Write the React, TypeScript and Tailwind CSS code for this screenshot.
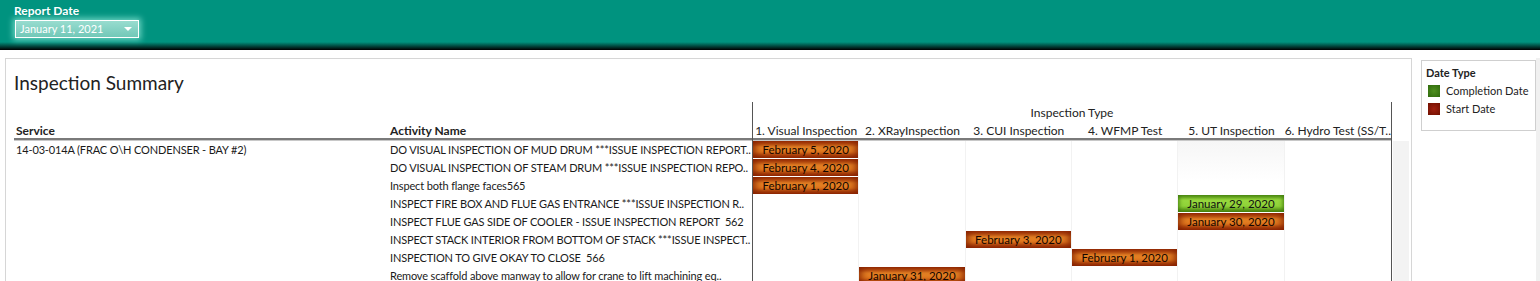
import React from "react";

type Cell = { col: number; label: string; kind: "start" | "done" };

const columns = [
  "1. Visual Inspection",
  "2. XRayInspection",
  "3. CUI Inspection",
  "4. WFMP Test",
  "5. UT Inspection",
  "6. Hydro Test (SS/T..",
];

const rows: { activity: string; cells: Cell[] }[] = [
  {
    activity: "DO VISUAL INSPECTION OF MUD DRUM ***ISSUE INSPECTION REPORT..",
    cells: [{ col: 0, label: "February 5, 2020", kind: "start" }],
  },
  {
    activity: "DO VISUAL INSPECTION OF STEAM DRUM ***ISSUE INSPECTION REPO..",
    cells: [{ col: 0, label: "February 4, 2020", kind: "start" }],
  },
  {
    activity: "Inspect both flange faces565",
    cells: [{ col: 0, label: "February 1, 2020", kind: "start" }],
  },
  {
    activity: "INSPECT FIRE BOX AND FLUE GAS ENTRANCE ***ISSUE INSPECTION R..",
    cells: [{ col: 4, label: "January 29, 2020", kind: "done" }],
  },
  {
    activity: "INSPECT FLUE GAS SIDE OF COOLER - ISSUE INSPECTION REPORT  562",
    cells: [{ col: 4, label: "January 30, 2020", kind: "start" }],
  },
  {
    activity: "INSPECT STACK INTERIOR FROM BOTTOM OF STACK ***ISSUE INSPECT..",
    cells: [{ col: 2, label: "February 3, 2020", kind: "start" }],
  },
  {
    activity: "INSPECTION TO GIVE OKAY TO CLOSE  566",
    cells: [{ col: 3, label: "February 1, 2020", kind: "start" }],
  },
  {
    activity: "Remove scaffold above manway to allow for crane to lift machining eq..",
    cells: [{ col: 1, label: "January 31, 2020", kind: "start" }],
  },
];

function Bar({ cell }: { cell: Cell }) {
  const done = cell.kind === "done";
  return (
    <div
      className={
        done
          ? "flex h-full items-center justify-center bg-[linear-gradient(#5f9f1c,#98d83e_30%,#8fd238_65%,#4f8a12)] shadow-[inset_0_0_4px_1px_#3f7a0c] text-[#111]"
          : "flex h-full items-center justify-center bg-[linear-gradient(#b03c08,#f3902a_35%,#ef8522_65%,#a03006)] shadow-[inset_0_0_8px_2px_#822000] text-[#140600]"
      }
    >
      {cell.label}
    </div>
  );
}

export default function App() {
  return (
    <div className="relative h-[281px] w-[1540px] overflow-hidden bg-white font-['Lato','Liberation_Sans',sans-serif] text-[12px] text-[#222]">
      {/* filter bar */}
      <div className="h-[50px] bg-[linear-gradient(#00937f_0%,#00937f_84%,#014a40_92%,#000_100%)] pl-[14px] pt-[4px]">
        <div className="text-[12px] font-bold leading-[14px] text-white">Report Date</div>
        <div className="ml-[1px] mt-[2px] flex h-[18px] w-[124px] items-center justify-between border border-white bg-[linear-gradient(#98dccf,#72c8b8)] pl-[4px] pr-[6px] text-[11px] text-white shadow-[0_0_6px_2px_rgba(180,255,240,0.6)]">
          <span>January 11, 2021</span>
          <span className="h-0 w-0 border-x-[4px] border-t-[4px] border-x-transparent border-t-white" />
        </div>
      </div>

      <div className="flex pt-[8px]">
        {/* main panel */}
        <div className="ml-[5px] h-[240px] w-[1408px] border-l border-r border-t border-[#d6d6d6]">
          <div className="pl-[8px] pt-[12px] text-[19px] leading-[24px] text-[#222]">Inspection Summary</div>

          <div className="mt-[7px] flex">
            {/* left headers and text */}
            <div className="w-[746px] shrink-0">
              <div className="h-[20px]" />
              <div className="flex h-[16px] items-end pl-[8px] font-bold leading-[14px]">
                <span className="w-[376px] shrink-0 pl-[2px]">Service</span>
                <span>Activity Name</span>
              </div>
              <div className="ml-[8px] h-[3px] border-b border-t-2 border-b-[#c8c8c8] border-t-[#7a7a7a]" />
              {rows.map((r, i) => (
                <div key={i} className="flex h-[18px] items-center pl-[10px] text-[11px] leading-[14px] tracking-[-0.15px] text-[#1a1a1a]">
                  <span className="w-[374px] shrink-0">{i === 0 ? "14-03-014A (FRAC O\\H CONDENSER - BAY #2)" : ""}</span>
                  <span className="whitespace-pre">{r.activity}</span>
                </div>
              ))}
            </div>

            {/* inspection type columns */}
            <div className="w-[640px] shrink-0 border-x border-[#555]">
              <div className="flex h-[20px] items-center justify-center pt-[2px] leading-[14px]">Inspection Type</div>
              <div className="grid h-[16px] grid-cols-6 items-end leading-[14px]">
                {columns.map((c) => (
                  <span key={c} className="whitespace-nowrap text-center">
                    {c}
                  </span>
                ))}
              </div>
              <div className="grid h-[3px] grid-cols-6 border-b border-t-2 border-b-[#c8c8c8] border-t-[#7a7a7a]">
                <span />
                <span className="bg-[#7a3a10]" />
              </div>
              <div className="grid grid-cols-6 divide-x divide-[#f2f2f2] text-[11.5px]">
                {columns.map((_, ci) => (
                  <div key={ci} className={ci === 4 ? "bg-[linear-gradient(#f6f6f6,#fff_40px)]" : ""}>
                    {rows.map((r, ri) => {
                      const cell = r.cells.find((c) => c.col === ci);
                      return (
                        <div key={ri} className="h-[18px] pb-px">
                          {cell ? <Bar cell={cell} /> : null}
                        </div>
                      );
                    })}
                  </div>
                ))}
              </div>
            </div>

            {/* scrollbar track */}
            <div className="ml-px mt-[39px] h-[150px] w-[16px] bg-[#f3f3f3]" />
          </div>
        </div>

        {/* legend */}
        <div className="ml-[9px] mt-[2px] h-[71px] w-[115px] border border-[#cfcfcf] pl-[4px] pt-[5px] text-[11px] leading-[14px]">
          <div className="font-bold">Date Type</div>
          <div className="mt-[4px] flex items-center gap-[6px] whitespace-nowrap pl-[2px]">
            <span className="h-[12px] w-[12px] shrink-0 bg-[radial-gradient(#4f8f1f,#2f6a0c)]" />
            <span>Completion Date</span>
          </div>
          <div className="mt-[4px] flex items-center gap-[6px] pl-[2px]">
            <span className="h-[12px] w-[12px] shrink-0 bg-[radial-gradient(#a02010,#701000)]" />
            <span>Start Date</span>
          </div>
        </div>
        <div className="ml-auto h-[240px] w-[4px] bg-[#f0f0f0]" />
      </div>
    </div>
  );
}
